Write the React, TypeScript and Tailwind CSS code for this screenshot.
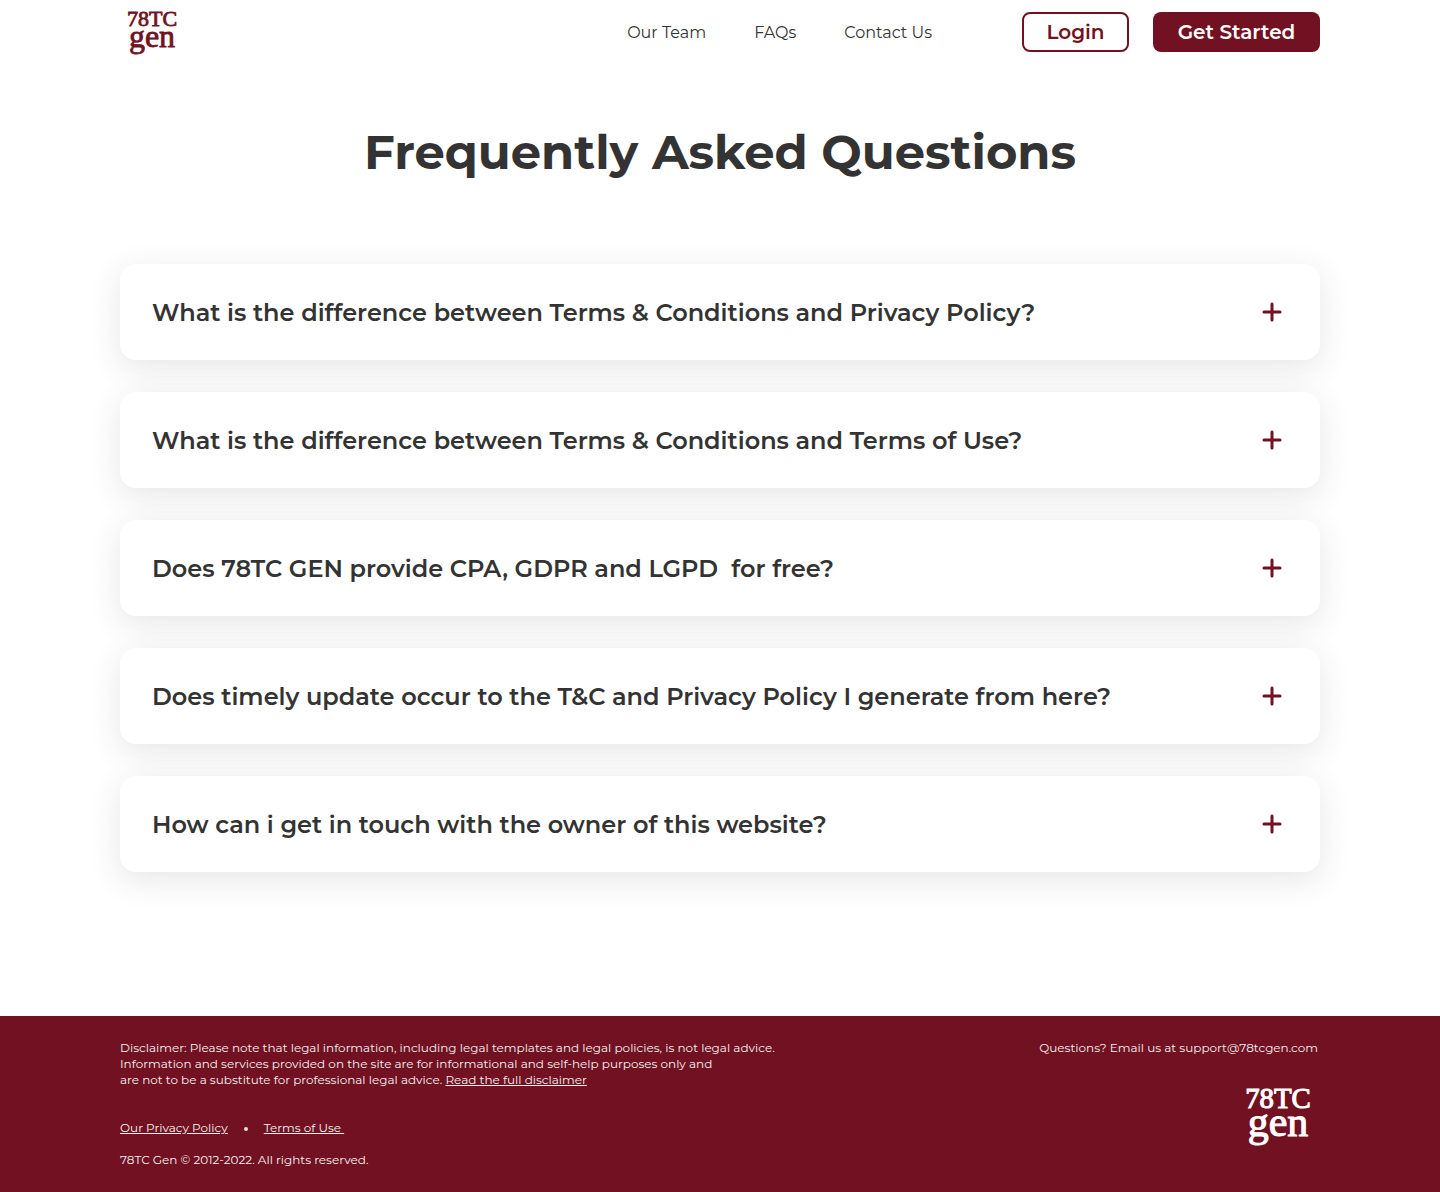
const questions = [
  "What is the difference between Terms & Conditions and Privacy Policy?",
  "What is the difference between Terms & Conditions and Terms of Use?",
  "Does 78TC GEN provide CPA, GDPR and LGPD  for free?",
  "Does timely update occur to the T&C and Privacy Policy I generate from here?",
  "How can i get in touch with the owner of this website?",
];

function Logo({ className }: { className: string }) {
  return (
    <svg
      viewBox="0 0 64 64"
      role="img"
      aria-label="78TC gen"
      className={className}
      fill="currentColor"
      stroke="currentColor"
      strokeWidth="0.8"
      fontFamily="'Liberation Serif', serif"
      textAnchor="middle"
    >
      <text x="32" y="26" fontSize="22">78TC</text>
      <text x="32" y="47" fontSize="32">gen</text>
    </svg>
  );
}

function PlusIcon() {
  return (
    <svg
      viewBox="0 0 32 32"
      className="size-8 shrink-0 text-[#721121]"
      fill="none"
      stroke="currentColor"
      strokeWidth="3"
      strokeLinecap="round"
      aria-hidden="true"
    >
      <path d="M16 8v16M8 16h16" />
    </svg>
  );
}

function Header() {
  return (
    <header className="mx-auto flex h-16 w-full max-w-[1200px] items-center justify-between">
      <a href="#home">
        <Logo className="size-16 text-[#721121]" />
      </a>
      <div className="flex items-center gap-[90px]">
        <nav className="flex gap-12 pt-0.5 text-base text-[#333]">
          <a href="#team">Our Team</a>
          <a href="#faqs">FAQs</a>
          <a href="#contact">Contact Us</a>
        </nav>
        <div className="flex gap-6 text-xl font-semibold">
          <button className="h-10 min-w-[107px] rounded-lg border-2 border-[#721121] px-5 leading-5 text-[#721121]">
            Login
          </button>
          <button className="h-10 min-w-[167px] rounded-lg bg-[#721121] px-5 leading-5 text-white">
            Get Started
          </button>
        </div>
      </div>
    </header>
  );
}

function Footer() {
  return (
    <footer className="bg-[#721121] px-6 text-[#f2f2f2]">
      <div className="mx-auto flex max-w-[1200px] justify-between gap-8 pt-6 pb-6 text-xs leading-4">
        <div>
          <p>
            Disclaimer: Please note that legal information, including legal templates and legal policies, is not legal advice.
            <br />
            Information and services provided on the site are for informational and self-help purposes only and
            <br />
            are not to be a substitute for professional legal advice.{" "}
            <a href="#disclaimer" className="underline">Read the full disclaimer</a>
          </p>
          <div className="mt-8 flex items-center gap-4">
            <a href="#privacy" className="underline">Our Privacy Policy</a>
            <span className="mt-0.5 size-1 rounded-full bg-[#e0e0e0]" />
            <a href="#terms" className="whitespace-pre underline">{"Terms of Use "}</a>
          </div>
          <p className="mt-4">78TC Gen © 2012-2022. All rights reserved.</p>
        </div>
        <div className="flex flex-col items-end gap-[18px]">
          <p className="pr-0.5">Questions? Email us at support@78tcgen.com</p>
          <Logo className="size-[84px] text-white" />
        </div>
      </div>
    </footer>
  );
}

export default function App() {
  return (
    <div className="flex min-h-screen flex-col bg-white font-[Montserrat,Inter,sans-serif] text-[#333]">
      <div className="px-6">
        <Header />
      </div>
      <main className="mx-auto w-full max-w-[1248px] grow px-6 pt-14 pb-36">
        <h1 className="text-center text-5xl leading-16 font-bold">Frequently Asked Questions</h1>
        <ul className="mt-20 flex flex-col gap-8">
          {questions.map((question) => (
            <li key={question}>
              <button
                aria-expanded="false"
                className="flex min-h-24 w-full items-center justify-between gap-6 rounded-2xl bg-white px-8 text-left text-2xl font-semibold shadow-[0_8px_32px_rgba(51,51,51,0.12)]"
              >
                <span className="pt-0.5 whitespace-pre-wrap">{question}</span>
                <PlusIcon />
              </button>
            </li>
          ))}
        </ul>
      </main>
      <Footer />
    </div>
  );
}
